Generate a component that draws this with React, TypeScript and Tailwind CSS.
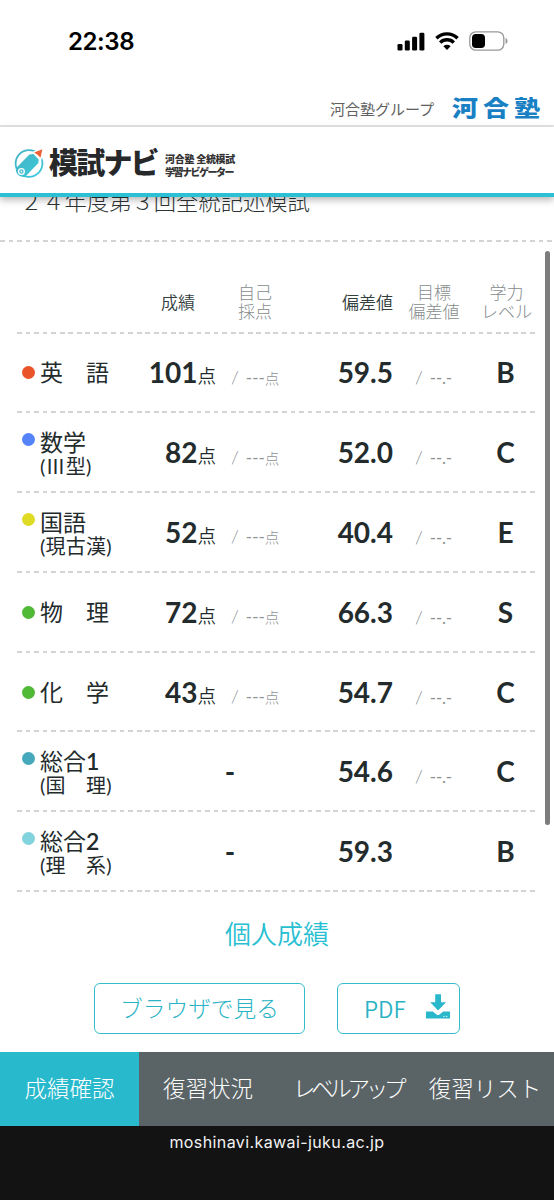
import { ReactNode } from "react";
import clsx from "clsx";

type Subject = {
  name: string;
  number?: string;
  detail?: string;
  color: string;
  score?: string;
  deviation: string;
  hasTarget: boolean;
  level: string;
};

const subjects: Subject[] = [
  { name: "英　語", color: "bg-[#e95528]", score: "101", deviation: "59.5", hasTarget: true, level: "B" },
  { name: "数学", detail: "(Ⅲ型)", color: "bg-[#5583fa]", score: "82", deviation: "52.0", hasTarget: true, level: "C" },
  { name: "国語", detail: "(現古漢)", color: "bg-[#dfdb25]", score: "52", deviation: "40.4", hasTarget: true, level: "E" },
  { name: "物　理", color: "bg-[#50b936]", score: "72", deviation: "66.3", hasTarget: true, level: "S" },
  { name: "化　学", color: "bg-[#50b936]", score: "43", deviation: "54.7", hasTarget: true, level: "C" },
  { name: "総合", number: "1", detail: "(国　理)", color: "bg-[#45a9bb]", deviation: "54.6", hasTarget: true, level: "C" },
  { name: "総合", number: "2", detail: "(理　系)", color: "bg-[#83d3de]", deviation: "59.3", hasTarget: false, level: "B" },
];

const tabs = [
  { label: "成績確認", active: true },
  { label: "復習状況" },
  { label: "レベルアップ", tight: true },
  { label: "復習リスト" },
];

function Dashes() {
  return (
    <div className="h-[2px] w-full shrink-0 bg-[repeating-linear-gradient(90deg,#d2d5d5_0px,#d2d5d5_4.8px,transparent_4.8px,transparent_8.55px)]" />
  );
}

function StatusBar() {
  return (
    <div className="flex h-[83px] items-start justify-between pl-[68px] pr-[46px] pt-[27px] text-black">
      <span className="font-['Inter',sans-serif] text-[24px] font-semibold leading-[29px] tracking-[-0.4px]">22:38</span>
      <div className="flex items-center gap-[10px] pt-[4px]">
        <svg width="28" height="19" viewBox="0 0 28 19">
          <rect x="0.5" y="12" width="5" height="6.5" rx="1.3" />
          <rect x="7.8" y="8.5" width="5" height="10" rx="1.3" />
          <rect x="15.1" y="4.8" width="5" height="13.7" rx="1.3" />
          <rect x="22.4" y="0.7" width="5" height="17.8" rx="1.3" />
        </svg>
        <svg width="24" height="18" viewBox="0 0 24 18" fill="none" stroke="#000" strokeWidth="3.4">
          <path d="M1.4 6.3a15 15 0 0 1 21.2 0" />
          <path d="M5.2 10.6a9.6 9.6 0 0 1 13.6 0" />
          <path d="M8.4 14.3a5.1 5.1 0 0 1 7.2 0L12 18z" fill="#000" stroke="none" />
        </svg>
        <svg width="39" height="20" viewBox="0 0 39 20">
          <rect x="0.8" y="0.8" width="34" height="18.4" rx="6" fill="none" stroke="#999" strokeWidth="1.3" />
          <rect x="3" y="3" width="13" height="14" rx="3.8" />
          <path d="M36.5 7v6c1.4-.6 2-1.7 2-3s-.6-2.4-2-3z" fill="#999" />
        </svg>
      </div>
    </div>
  );
}

function LogoMark() {
  return (
    <svg width="32" height="32" viewBox="0 0 32 32" className="shrink-0">
      <defs>
        <linearGradient id="ring" x1="0" y1="0" x2="1" y2="1">
          <stop offset="0" stopColor="#45b2c2" />
          <stop offset="1" stopColor="#3ccbdc" />
        </linearGradient>
      </defs>
      <circle cx="16" cy="16.5" r="13.4" fill="none" stroke="url(#ring)" strokeWidth="1.8" />
      <path d="M29.4 2.6 27.3 12.3 20.5 5.7z" fill="#fff" stroke="#fff" strokeWidth="2.4" />
      <path d="M16.4 7.4 20.5 7.1 25.7 12.4 25.4 16 12.9 28.9C8.3 32.3.3 25.6 3.9 20.3z" fill="url(#ring)" />
      <circle cx="8.4" cy="24.5" r="2.9" fill="#45bfd0" stroke="#fff" strokeWidth="1.3" />
      <circle cx="8.4" cy="24.5" r="0.9" fill="#fff" />
      <path d="M29.4 2.3 27.5 10.8 24.8 7.9 21.2 5.6z" fill="#ef6034" />
    </svg>
  );
}

function SiteHeader() {
  return (
    <header className="relative z-10 bg-white shadow-[0_3px_7px_rgba(0,0,0,0.28)]">
      <div className="flex h-[70px] items-center border-b-4 border-[#2bc0d3] pl-[13px] pt-[6px]">
        <LogoMark />
        <span className="ml-[4px] w-[108px] whitespace-nowrap text-[29px] font-black leading-8 tracking-[-1.8px] text-[#26282a]">模試ナビ</span>
        <div className="ml-[8px] mt-[5px] whitespace-nowrap text-[10px] font-black leading-[12.5px] text-[#333]">
          <p className="tracking-[-0.3px]">河合塾 全統模試</p>
          <p className="tracking-[-1.5px]">学習ナビゲーター</p>
        </div>
      </div>
    </header>
  );
}

function HeadCell({ children, muted, className }: { children: ReactNode; muted?: boolean; className?: string }) {
  return (
    <div
      className={clsx(
        "text-center text-[17px] leading-[19.5px]",
        muted ? "font-light text-[#858b8c]" : "font-[350] text-[#333e3f]",
        className,
      )}
    >
      {children}
    </div>
  );
}

function SubjectRow({ subject }: { subject: Subject }) {
  return (
    <div className="grid h-[77.8px] grid-cols-[119px_80px_85px_92px_82px_63px] items-center text-[#232b2c]">
      <div className={clsx("flex pl-[5px]", subject.detail && "pt-[2px]")}>
        <span className={clsx("h-[13px] w-[13px] shrink-0 rounded-full", subject.detail ? "mt-[4px]" : "mt-[7px]", subject.color)} />
        <div className="ml-[5px] whitespace-nowrap">
          <p className="text-[23px] leading-[26px]">
            {subject.name}
            {subject.number && <span className="font-semibold">{subject.number}</span>}
          </p>
          {subject.detail && <p className="text-[20px] leading-[22px] tracking-[0.2px]">{subject.detail}</p>}
        </div>
      </div>
      {subject.score ? (
        <>
          <div className="pt-[5px] text-right leading-8">
            <span className="text-[28px] font-bold">{subject.score}</span>
            <span className="text-[18.5px] font-[350]">点</span>
          </div>
          <div className="whitespace-nowrap pl-[15px] pt-[11px] leading-6 text-[#8f9496]">
            <span className="mr-[7px] text-[18px] font-light">/</span>
            <span className="text-[17px]">---</span>
            <span className="text-[14.5px] font-light">点</span>
          </div>
        </>
      ) : (
        <div className="col-span-2 pl-[23px] text-center text-[28px] font-bold leading-8">-</div>
      )}
      <div className="text-right text-[28px] font-bold leading-8">{subject.deviation}</div>
      <div className="whitespace-nowrap pl-[22px] pt-[11px] leading-6 text-[#8a9092]">
        {subject.hasTarget && (
          <>
            <span className="mr-[7px] text-[18px] font-light">/</span>
            <span className="text-[17px] tracking-[-0.2px]">--.-</span>
          </>
        )}
      </div>
      <div className="pr-[2px] text-center text-[28px] font-bold leading-8">{subject.level}</div>
    </div>
  );
}

function DownloadIcon() {
  return (
    <svg width="24" height="25" viewBox="0 0 24 25" fill="#29b8cb">
      <path d="M9.200.3h5.800v8h5L12.100 16.600 4.200 8.300h5z" />
      <path d="M0 17.600h6.800l3.700 2.900a2.400 2.400 0 0 0 3 0l3.700-2.900H24v6.900H0z" />
      <circle cx="18" cy="22.400" r="0.600" fill="#fff" />
      <circle cx="20.800" cy="22.400" r="0.600" fill="#fff" />
    </svg>
  );
}

export default function App() {
  return (
    <div className="flex h-[1200px] w-[554px] flex-col overflow-hidden bg-white font-['Lato','Noto_Sans_CJK_JP',sans-serif]">
      <StatusBar />
      <div className="flex h-[44px] items-center justify-end border-b-2 border-[#e6e6e6] pr-[9px] pt-[6px]">
        <span className="mt-[4px] text-[15px] text-[#606060]">河合塾グループ</span>
        <span className="ml-[18px] scale-y-[0.85] text-[26px] font-black leading-6 tracking-[5px] text-[#1a80c4]">河合塾</span>
      </div>
      <SiteHeader />

      <main className="relative h-[855px] shrink-0 overflow-hidden">
        <div className="flex h-[45px] flex-col justify-between">
          <h1 className="-mt-[11px] whitespace-nowrap pl-[20px] text-[22.3px] font-light leading-8 text-[#2c3435]">２４年度第３回全統記述模試</h1>
          <Dashes />
        </div>
        <section className="ml-[17px] w-[521px]">
          <div className="grid h-[89.5px] grid-cols-[119px_80px_85px_92px_82px_63px] items-center pt-[31px]">
            <HeadCell className="col-start-2 pl-[4px]">成績</HeadCell>
            <HeadCell muted className="pr-[7px]">自己<br />採点</HeadCell>
            <HeadCell className="pl-[41px]">偏差値</HeadCell>
            <HeadCell muted>目標<br />偏差値</HeadCell>
            <HeadCell muted className="whitespace-nowrap">学力<br />レベル</HeadCell>
          </div>
          <Dashes />
          {subjects.map(subject => (
            <div key={subject.name + (subject.number ?? "")}>
              <SubjectRow subject={subject} />
              <Dashes />
            </div>
          ))}
        </section>
        <h2 className="mt-[24px] text-center text-[26px] font-[350] leading-9 text-[#29bfd2]">個人成績</h2>
        <div className="mt-[31px] flex gap-[32px] pl-[94px] text-[#29b3c5]">
          <button className="h-[51px] w-[211px] rounded-md border-[1.5px] border-[#35bdce] text-[22.7px] font-light">ブラウザで見る</button>
          <button className="flex h-[51px] w-[123px] items-center rounded-md border-[1.5px] border-[#35bdce] pl-[26px] font-['Noto_Sans_CJK_JP',sans-serif] text-[22.5px] font-[350]">
            PDF
            <span className="-mt-[5px] ml-[20px]"><DownloadIcon /></span>
          </button>
        </div>
        <div className="absolute right-[4px] top-[54px] h-[574px] w-[5px] rounded-full bg-[#7d7d7d]" />
      </main>

      <nav className="grid h-[74px] shrink-0 grid-cols-[139px_138px_139px_138px]">
        {tabs.map(tab => (
          <div
            key={tab.label}
            className={clsx(
              "flex items-center justify-center whitespace-nowrap text-[22.5px] font-light text-white",
              tab.active ? "bg-[#28b9cd]" : "bg-[#5a6466]",
              tab.tight && "pl-[2px] tracking-[-4.3px]",
            )}
          >
            {tab.label}
          </div>
        ))}
      </nav>
      <footer className="grow bg-[#131313] pt-[5px] text-center font-['Inter',sans-serif] text-[16px] leading-[22px] tracking-[0.4px] text-[#f2f2f2]">
        moshinavi.kawai-juku.ac.jp
      </footer>
    </div>
  );
}
